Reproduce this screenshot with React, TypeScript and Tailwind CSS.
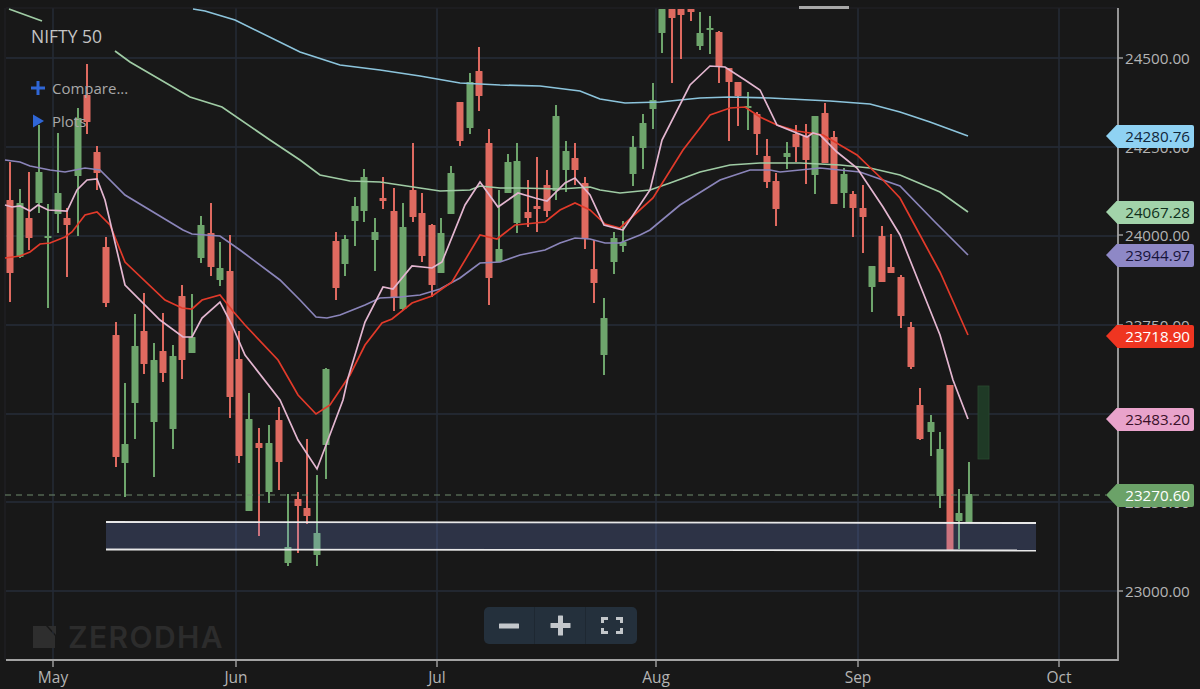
import React from "react";

// x, wick top, body top, body bottom, wick bottom, colour
type Candle = [number, number, number, number, number, "r" | "g"];

const candles: Candle[] = [
  [10, 162, 200, 273, 302, "r"],
  [20, 189, 203, 257, 258, "g"],
  [29, 172, 218, 238, 250, "r"],
  [39, 125, 172, 203, 213, "g"],
  [48, 204, 236, 237, 308, "g"],
  [58, 133, 193, 214, 233, "g"],
  [67, 208, 218, 225, 277, "r"],
  [78, 108, 118, 176, 236, "g"],
  [87, 64, 95, 122, 134, "r"],
  [97, 146, 152, 173, 190, "r"],
  [106, 237, 247, 303, 307, "r"],
  [116, 322, 335, 457, 467, "r"],
  [125, 383, 444, 463, 497, "g"],
  [135, 314, 346, 403, 439, "g"],
  [144, 293, 331, 364, 374, "r"],
  [154, 343, 360, 422, 477, "g"],
  [163, 313, 351, 373, 382, "r"],
  [173, 345, 356, 429, 449, "g"],
  [182, 285, 296, 360, 379, "r"],
  [192, 294, 337, 353, 353, "g"],
  [201, 216, 225, 258, 263, "g"],
  [211, 203, 233, 267, 276, "r"],
  [220, 242, 268, 280, 286, "g"],
  [230, 235, 271, 397, 418, "r"],
  [239, 331, 359, 456, 463, "r"],
  [249, 393, 419, 511, 511, "g"],
  [259, 428, 443, 448, 536, "r"],
  [269, 425, 443, 492, 503, "g"],
  [279, 407, 420, 462, 490, "r"],
  [288, 494, 547, 563, 566, "g"],
  [298, 492, 499, 506, 553, "r"],
  [307, 439, 508, 516, 524, "r"],
  [317, 475, 533, 555, 566, "g"],
  [326, 368, 369, 445, 479, "g"],
  [336, 232, 241, 288, 300, "r"],
  [345, 235, 239, 264, 276, "g"],
  [355, 197, 206, 221, 246, "g"],
  [364, 169, 177, 211, 222, "g"],
  [375, 218, 232, 240, 271, "g"],
  [383, 177, 198, 201, 209, "r"],
  [394, 188, 211, 298, 311, "r"],
  [403, 203, 227, 309, 310, "g"],
  [413, 143, 190, 217, 222, "r"],
  [422, 193, 213, 256, 262, "r"],
  [432, 224, 225, 285, 297, "r"],
  [441, 218, 233, 273, 273, "g"],
  [451, 166, 173, 214, 214, "g"],
  [460, 102, 102, 141, 146, "r"],
  [470, 73, 82, 128, 134, "g"],
  [479, 47, 71, 96, 111, "r"],
  [489, 129, 143, 278, 305, "r"],
  [499, 190, 249, 262, 262, "g"],
  [508, 154, 162, 193, 193, "g"],
  [517, 143, 161, 223, 233, "g"],
  [528, 180, 212, 218, 227, "r"],
  [537, 157, 206, 209, 232, "r"],
  [547, 170, 185, 211, 217, "r"],
  [556, 105, 116, 191, 200, "g"],
  [566, 141, 151, 170, 192, "g"],
  [575, 143, 158, 170, 185, "r"],
  [585, 177, 183, 239, 249, "r"],
  [594, 240, 269, 283, 303, "r"],
  [604, 298, 318, 355, 375, "g"],
  [614, 232, 238, 262, 274, "g"],
  [623, 221, 242, 246, 252, "g"],
  [633, 136, 147, 174, 186, "g"],
  [643, 114, 123, 148, 169, "g"],
  [653, 83, 100, 109, 129, "g"],
  [662, 9, 9, 33, 53, "g"],
  [672, 9, 9, 18, 83, "r"],
  [681, 9, 9, 15, 59, "r"],
  [691, 9, 9, 12, 21, "r"],
  [700, 12, 33, 46, 50, "g"],
  [710, 16, 28, 30, 54, "g"],
  [719, 31, 32, 67, 83, "r"],
  [729, 68, 68, 82, 141, "r"],
  [738, 82, 82, 96, 126, "r"],
  [748, 92, 106, 108, 130, "g"],
  [757, 112, 114, 134, 155, "r"],
  [767, 139, 156, 182, 188, "r"],
  [776, 173, 181, 209, 226, "r"],
  [787, 142, 153, 157, 169, "g"],
  [796, 125, 134, 147, 162, "r"],
  [806, 124, 136, 160, 184, "r"],
  [815, 116, 116, 175, 194, "g"],
  [825, 103, 113, 163, 163, "r"],
  [834, 131, 137, 204, 204, "r"],
  [844, 168, 174, 193, 208, "g"],
  [853, 191, 194, 208, 237, "r"],
  [863, 185, 208, 217, 253, "r"],
  [872, 266, 266, 287, 312, "g"],
  [882, 226, 236, 282, 282, "r"],
  [891, 234, 267, 273, 273, "r"],
  [901, 275, 277, 316, 328, "r"],
  [911, 322, 327, 367, 369, "r"],
  [920, 388, 405, 439, 440, "r"],
  [931, 415, 422, 432, 456, "g"],
  [940, 432, 449, 496, 508, "g"],
  [950, 385, 385, 550, 550, "r"],
  [959, 489, 513, 521, 549, "g"],
  [969, 462, 494, 522, 522, "g"],
];

const blueLine =
  "193,9 205,11 235,20 300,52 340,65 380,70 420,76 460,83 500,85 540,86 580,91 600,99 625,103 660,102 700,98 730,97 770,98 830,101 870,104 900,112 930,122 968,136";
const greenLineA = "9,9 42,21";
const greenLineB =
  "115,51 130,62 190,97 222,107 270,140 300,160 320,175 350,181 380,182 400,185 440,191 470,190 480,186 500,188 520,188 560,189 590,187 600,190 620,193 650,190 670,183 700,172 730,165 760,163 800,163 840,165 870,168 900,175 940,192 968,212";
const purpleLine =
  "5,160 20,162 30,166 50,170 65,172 85,168 100,170 125,195 183,230 192,234 220,236 240,250 280,280 300,300 316,317 327,318 340,315 365,305 380,298 400,297 420,295 440,289 460,278 480,263 500,262 520,255 545,250 560,243 575,238 590,239 605,243 620,243 640,235 650,230 680,205 720,180 750,170 770,170 780,172 820,168 860,172 900,186 935,222 968,255";
const redLine =
  "5,258 20,256 30,252 40,244 50,243 65,237 72,232 85,215 97,212 110,225 125,262 165,300 182,308 192,309 202,300 220,295 232,310 245,325 278,360 298,395 316,414 330,405 350,375 365,345 382,323 392,319 412,303 432,296 452,282 480,235 497,239 515,225 545,222 560,210 575,203 590,210 605,224 620,228 653,198 683,150 710,115 730,108 745,107 760,117 777,125 797,131 823,135 857,155 883,180 900,198 920,235 940,272 968,335";
const pinkLine =
  "5,205 12,207 20,206 30,211 38,205 48,210 67,211 77,190 87,180 97,179 105,200 125,285 160,320 183,337 192,337 202,318 220,302 232,325 245,355 280,400 298,440 317,469 343,400 348,378 365,322 383,287 393,289 412,266 432,268 442,262 465,205 480,182 498,207 518,193 535,198 547,201 565,183 575,178 590,195 604,225 623,230 650,190 662,140 690,85 710,66 725,67 745,80 760,90 777,125 807,137 813,133 820,135 837,152 857,168 883,207 900,235 920,285 940,335 953,380 968,419";

const vGrid = [53, 236, 437, 656, 858, 1059];
const hGrid = [58, 147, 236, 325, 414, 502, 591];

const prices = [
  { label: "24500.00", y: 58 },
  { label: "24250.00", y: 147 },
  { label: "24000.00", y: 235 },
  { label: "23750.00", y: 325 },
  { label: "23250.00", y: 502 },
  { label: "23000.00", y: 591 },
];

const tags = [
  { label: "24280.76", y: 136, arrow: "bg-[#8fd2f3]", text: "text-[#10263a]" },
  { label: "24067.28", y: 212, arrow: "bg-[#a2d3aa]", text: "text-[#10301c]" },
  { label: "23944.97", y: 255, arrow: "bg-[#8e88c6]", text: "text-[#17133a]" },
  { label: "23718.90", y: 336, arrow: "bg-[#ef3521]", text: "text-[#ffffff]" },
  { label: "23483.20", y: 419, arrow: "bg-[#e9a3cb]", text: "text-[#3a1029]" },
  { label: "23270.60", y: 495, arrow: "bg-[#6ba268]", text: "text-[#ffffff]" },
];

const months = [
  { label: "May", x: 53 },
  { label: "Jun", x: 236 },
  { label: "Jul", x: 437 },
  { label: "Aug", x: 656 },
  { label: "Sep", x: 858 },
  { label: "Oct", x: 1059 },
];

const ChartSvg = () => (
  <svg width={1200} height={689} className="absolute left-0 top-0 blur-[0.4px]">
    {vGrid.map((x) => (
      <line key={x} x1={x} y1={8} x2={x} y2={660} stroke="#262d38" strokeWidth={1.4} />
    ))}
    {hGrid.map((y) => (
      <line key={y} x1={6} y1={y} x2={1118} y2={y} stroke="#262d38" strokeWidth={1.4} />
    ))}
    <line x1={6} y1={8} x2={1118} y2={8} stroke="#222329" strokeWidth={1} />
    <line x1={5} y1={8} x2={5} y2={660} stroke="#222329" strokeWidth={1} />

    {candles.map(([x, high, top, bottom, low, c]) => {
      const color = c === "r" ? "#df6a60" : "#6ea56c";
      return (
        <g key={x} fill={color}>
          <rect x={x - 1} y={high} width={2} height={low - high} />
          <rect x={x - 3.5} y={top} width={7} height={Math.max(bottom - top, 2)} rx={0.6} />
        </g>
      );
    })}

    <rect x={978} y={386} width={11} height={73} fill="#1f3a26" stroke="#2a4a30" strokeWidth={0.8} />

    <line x1={5} y1={495} x2={1106} y2={495} stroke="#6f8a6c" strokeWidth={1.2} strokeDasharray="6 5" />

    <polyline points={blueLine} fill="none" stroke="#8cc4dc" strokeWidth={1.7} />
    <polyline points={greenLineA} fill="none" stroke="#9fcba4" strokeWidth={1.7} />
    <polyline points={greenLineB} fill="none" stroke="#9fcba4" strokeWidth={1.7} />
    <polyline points={purpleLine} fill="none" stroke="#8b85ba" strokeWidth={1.7} />
    <polyline points={redLine} fill="none" stroke="#e23a2a" strokeWidth={1.7} />
    <polyline points={pinkLine} fill="none" stroke="#e3b6d0" strokeWidth={1.7} />

    <rect x={106} y={522} width={930} height={28} fill="#82a0ff" fillOpacity={0.2} />
    <line x1={106} y1={522} x2={1036} y2={523} stroke="#e8e8e8" strokeWidth={1.8} />
    <line x1={106} y1={549.5} x2={1036} y2={550.5} stroke="#e8e8e8" strokeWidth={1.8} />

    <rect x={799} y={6} width={50} height={3} fill="#a8a8a8" />

    <line x1={6} y1={660} x2={1118} y2={660} stroke="#a3a3a3" strokeWidth={1.8} />
    <line x1={1118} y1={8} x2={1118} y2={661} stroke="#a3a3a3" strokeWidth={1.8} />
    {months.map((m) => (
      <line key={m.x} x1={m.x} y1={660} x2={m.x} y2={667} stroke="#a3a3a3" strokeWidth={1.4} />
    ))}
    {prices.map((p) => (
      <line key={p.y} x1={1118} y1={p.y} x2={1123} y2={p.y} stroke="#a3a3a3" strokeWidth={1.4} />
    ))}

    {/* watermark logo */}
    <path d="M33 626 L46 626 L55 636 L55 648 L33 648 Z" fill="#2e2e2e" />
    <path d="M48 626 L56 626 L56 635 Z" fill="#2e2e2e" />
  </svg>
);

const ZoomControls = () => (
  <div className="absolute left-[484px] top-[607px] flex h-[37px] w-[153px] items-stretch divide-x divide-[#1e2832] rounded-[5px] bg-[#24303c]">
    <button className="flex w-[51px] items-center justify-center">
      <svg width={20} height={6} fill="#c3c7cb">
        <rect x={0} y={0.5} width={20} height={5} rx={0.5} />
      </svg>
    </button>
    <button className="flex w-[51px] items-center justify-center">
      <svg width={21} height={21} fill="#c3c7cb">
        <rect x={0.5} y={8} width={20} height={5} rx={0.5} />
        <rect x={8} y={0.5} width={5} height={20} rx={0.5} />
      </svg>
    </button>
    <button className="flex w-[51px] items-center justify-center">
      <svg width={22} height={17} fill="none" stroke="#c3c7cb" strokeWidth={3}>
        <path d="M7 1.5H1.5V6M15 1.5H20.5V6M7 15.5H1.5V11M15 15.5H20.5V11" />
      </svg>
    </button>
  </div>
);

const App: React.FC = () => {
  return (
    <div className="relative h-[689px] w-[1200px] overflow-hidden bg-[#181818] font-['Open_Sans',sans-serif]">
      <ChartSvg />

      <div className="absolute left-[31px] top-[25px] flex flex-col">
        <span className="text-[17.5px] leading-[22px] text-[#c4c4c4]">NIFTY 50</span>
        <div className="mt-[31px] flex items-center gap-[7px]">
          <svg width={14} height={14} fill="#2f66d6">
            <rect x={0} y={5.5} width={14} height={3} />
            <rect x={5.5} y={0} width={3} height={14} />
          </svg>
          <span className="text-[15px] leading-[20px] text-[#a8a8a8]">Compare...</span>
        </div>
        <div className="mt-[13px] flex items-center gap-[7px]">
          <svg width={14} height={14} fill="#2f66d6">
            <path d="M2 0.5 L13 7 L2 13.5 Z" />
          </svg>
          <span className="text-[15px] leading-[20px] text-[#a8a8a8]">Plots</span>
        </div>
      </div>

      <div className="absolute left-[68px] top-[619px] flex items-center text-[30px] font-semibold leading-[36px] tracking-[1.4px] text-[#2c2c2c] font-['Inter',sans-serif]">
        ZERODHA
      </div>

      {prices.map((p) => (
        <span
          key={p.label}
          className="absolute left-[1125px] text-[15.2px] leading-[20px] text-[#b4b4b4]"
          style={{ top: p.y - 10 }}
        >
          {p.label}
        </span>
      ))}

      {tags.map((t) => (
        <div
          key={t.label}
          className="absolute left-[1106px] flex h-[23px] w-[88px] items-stretch"
          style={{ top: t.y - 11.5 }}
        >
          <div className={`w-[11px] [clip-path:polygon(100%_0,100%_100%,0_50%)] ${t.arrow}`} />
          <div
            className={`flex flex-1 items-center justify-end rounded-r-[2px] pr-[4px] text-[15.2px] leading-[20px] ${t.arrow} ${t.text}`}
          >
            {t.label}
          </div>
        </div>
      ))}

      {months.map((m) => (
        <span
          key={m.label}
          className="absolute top-[667px] w-[60px] text-center text-[15.5px] leading-[20px] text-[#b4b4b4]"
          style={{ left: m.x - 30 }}
        >
          {m.label}
        </span>
      ))}

      <ZoomControls />
    </div>
  );
};

export default App;
